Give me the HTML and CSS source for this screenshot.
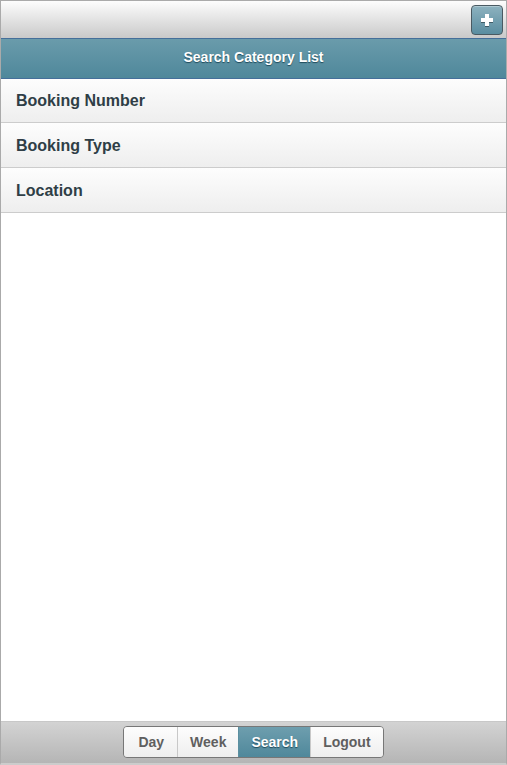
FILE: index.html
```html
<!DOCTYPE html>
<html lang="en">
<head>
    <meta charset="UTF-8">
    <meta name="viewport" content="width=device-width, initial-scale=1.0">
    <title>Search Category List</title>
    <link rel="stylesheet" href="styles.css">
</head>
<body>
    <div class="page">
        <div class="header">
            <button class="add-btn" aria-label="Add">
                <svg width="14" height="14" viewBox="0 0 14 14"><path d="M5 1h4v4h4v4H9v4H5V9H1V5h4z" fill="#fff"/></svg>
            </button>
        </div>
        <div class="title-bar">Search Category List</div>
        <ul class="category-list">
            <li>Booking Number</li>
            <li>Booking Type</li>
            <li>Location</li>
        </ul>
        <div class="footer">
            <div class="navbar">
                <a href="#">Day</a>
                <a href="#">Week</a>
                <a href="#" class="active">Search</a>
                <a href="#">Logout</a>
            </div>
        </div>
    </div>
</body>
</html>
```
FILE: styles.css
```css
* {
    box-sizing: border-box;
}
body {
    margin: 0;
    padding: 0;
    font-family: "Liberation Sans", Arial, sans-serif;
    background: #fff;
}
.page {
    display: flex;
    flex-direction: column;
    height: 765px;
    border: 1px solid #aaa;
    border-bottom: 2px solid #ccc;
}
.header {
    height: 37px;
    background: linear-gradient(#fdfdfd, #c9c9c9);
    display: flex;
    justify-content: flex-end;
    align-items: center;
    padding-right: 3px;
}
.add-btn {
    width: 32px;
    height: 30px;
    margin-top: 1px;
    border: 1px solid #4a5a62;
    border-radius: 4px;
    background: linear-gradient(#8db2bf, #5a8da0);
    box-shadow: inset 0 1px 0 rgba(255, 255, 255, 0.3);
    display: flex;
    align-items: center;
    justify-content: center;
    padding: 0;
    cursor: pointer;
}
.add-btn svg {
    filter: drop-shadow(0 1px 0 rgba(0, 0, 0, 0.4));
}
.title-bar {
    height: 41px;
    border-top: 1px solid #456f9a;
    border-bottom: 1px solid #456f9a;
    background: linear-gradient(#6a9bab, #4f889b);
    color: #fff;
    font-weight: bold;
    font-size: 14px;
    text-align: center;
    line-height: 36px;
    text-shadow: 0 1px 1px #1f4a5a;
}
.category-list {
    list-style: none;
    margin: 0;
    padding: 0;
    flex: 1;
}
.category-list li {
    height: 45px;
    padding-left: 15px;
    padding-top: 1px;
    line-height: 43px;
    font-size: 16px;
    font-weight: bold;
    color: #2f3e46;
    background: linear-gradient(#fdfdfd, #eeeeee);
    border-bottom: 1px solid #cccccc;
}
.category-list li:first-child {
    height: 44px;
    line-height: 42px;
}
.footer {
    height: 42px;
    background: linear-gradient(#d3d3d3, #b5b5b5);
    border-top: 1px solid #c8c8c8;
    display: flex;
    justify-content: center;
    align-items: flex-start;
    padding-top: 4px;
}
.navbar {
    display: flex;
    height: 32px;
    border: 1px solid #777;
    border-radius: 4px;
    overflow: hidden;
}
.navbar a {
    display: block;
    padding: 0 12px;
    line-height: 30px;
    font-size: 14px;
    font-weight: bold;
    color: #5f5f5f;
    text-decoration: none;
    background: linear-gradient(#fdfdfd, #eeeeee);
    border-left: 1px solid #c8c8c8;
}
.navbar a:first-child {
    border-left: none;
    padding: 0 13px 0 14px;
}
.navbar a.active {
    color: #fff;
    background: linear-gradient(#6e9eae, #4f889b);
    border-left-color: #5b8fa0;
    text-shadow: 0 1px 1px #1f4a5a;
}
```
